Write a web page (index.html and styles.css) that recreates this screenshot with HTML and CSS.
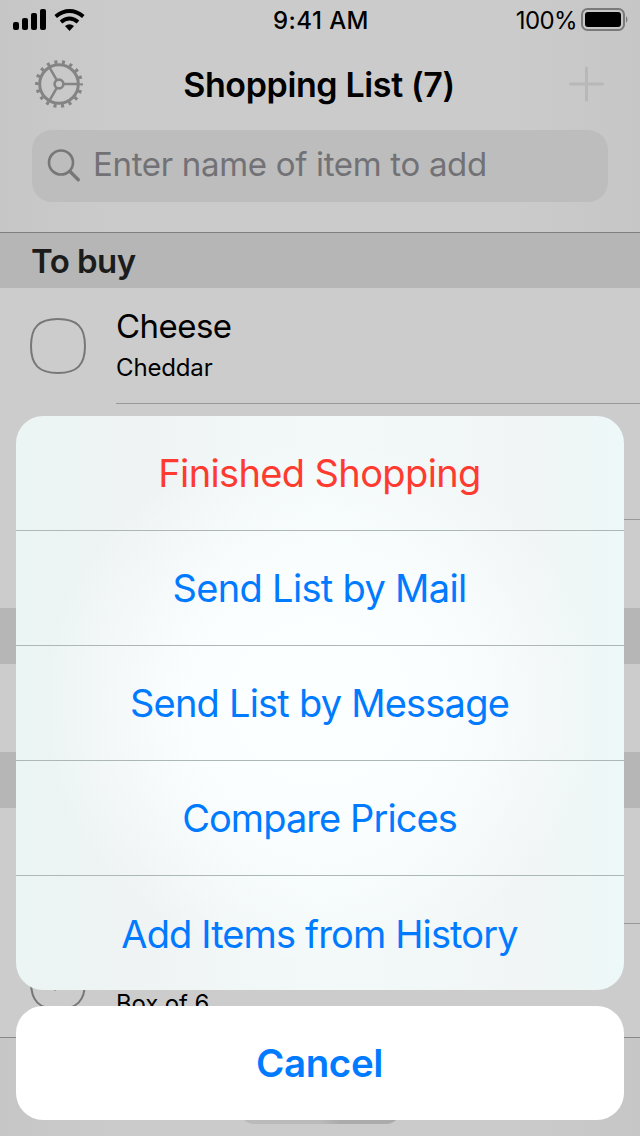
FILE: index.html
```html
<!DOCTYPE html>
<html lang="en">
<head>
<meta charset="utf-8">
<title>Shopping List</title>
<link rel="stylesheet" href="styles.css">
</head>
<body>
<div class="screen">
  <header class="top">
    <div class="status">
      <svg class="signal" width="76" height="24" viewBox="0 0 76 24">
        <rect x="1" y="14" width="6" height="8" rx="2"/><rect x="10" y="10" width="6" height="12" rx="2"/><rect x="19" y="5" width="6" height="17" rx="2"/><rect x="28" y="1" width="6" height="21" rx="2"/>
        <g fill="none" stroke="#000" stroke-width="4"><path d="M43.700 8.500Q57.500-2.500 71.300 8.500"/><path d="M49 14Q57.500 7 66 14"/></g>
        <path d="M53 18Q57.500 14.500 62 18L57.500 23Z"/>
      </svg>
      <span class="time">9:41 AM</span>
      <span class="power"><span class="pct">100%</span>
        <svg width="50" height="24" viewBox="0 0 50 24"><rect x="2" y="1" width="42" height="21" rx="5.500" fill="none" stroke="#7a7a7a" stroke-width="2"/><rect x="5" y="4" width="36" height="15" rx="3"/><path d="M46 8q3 3.500 0 7z" fill="#7a7a7a"/></svg>
      </span>
    </div>
    <div class="nav">
      <svg class="gear" width="50" height="50" viewBox="-25 -25 50 50">
        <g fill="none" stroke="#848484">
          <circle r="19.300" stroke-width="3"/>
          <circle r="22.100" stroke-width="3.600" stroke-dasharray="3 4.714" stroke-dashoffset="1.500"/>
          <circle r="4.400" stroke-width="2.600"/>
          <path d="M5 0H20M-2.500-4.300L-10-17.300M-2.500 4.300L-10 17.300" stroke-width="2.500"/>
        </g>
      </svg>
      <h1 class="title"><span>Shopping List (7)</span></h1>
      <svg class="plus" width="36" height="36" viewBox="0 0 36 36"><path d="M17.500 2V34M1.500 18H33.500" stroke="#b8b8b8" stroke-width="3" stroke-linecap="round"/></svg>
    </div>
    <div class="search">
      <svg width="34" height="34" viewBox="0 0 34 34" fill="none" stroke="#777" stroke-linecap="round"><circle cx="14" cy="13.500" r="12" stroke-width="2.600"/><path d="M23 22.500L31.300 30.800" stroke-width="3.400"/></svg>
      <span class="hint">Enter name of item to add</span>
    </div>
  </header>
  <main class="list">
    <h2 class="section"><span>To buy</span></h2>
    <div class="item">
      <svg class="box" width="56" height="56" viewBox="0 0 56 56"><path d="M28 1C47 1 55 9 55 28S47 55 28 55 1 47 1 28 9 1 28 1Z"/></svg>
      <div class="label"><span class="name">Cheese</span><span class="note">Cheddar</span></div>
    </div>
    <div class="item indent"><div class="label"></div></div>
    <div class="item short"></div>
    <h2 class="section"></h2>
    <div class="item short"></div>
    <h2 class="section"></h2>
    <div class="item indent"><div class="label"></div></div>
    <div class="item">
      <svg class="box" width="56" height="56" viewBox="0 0 56 56"><path d="M28 1C47 1 55 9 55 28S47 55 28 55 1 47 1 28 9 1 28 1Z"/><path d="M24 34.500L25 35.500L26 34.500"/></svg>
      <div class="label last"><span class="name"></span><span class="note six">Box of 6</span></div>
    </div>
  </main>
  <footer class="toolbar"><div class="segments"><i></i><i class="on"></i></div></footer>
  <div class="sheet">
    <div class="actions">
      <button class="action danger"><span class="finish">Finished Shopping</span></button>
      <button class="action"><span class="mail">Send List by Mail</span></button>
      <button class="action"><span class="message">Send List by Message</span></button>
      <button class="action"><span class="compare">Compare Prices</span></button>
      <button class="action"><span class="history">Add Items from History</span></button>
    </div>
    <button class="cancel"><span>Cancel</span></button>
  </div>
</div>
</body>
</html>
```
FILE: styles.css
```css
* { box-sizing: border-box; }
body { margin: 0; font-family: Inter, "Liberation Sans", sans-serif; color: #000; }
h1, h2 { margin: 0; }
button { border: 0; padding: 0; background: none; font-family: inherit; }
span { white-space: nowrap; }
svg { display: block; flex: none; }
.screen { position: relative; width: 640px; height: 1136px; overflow: hidden; background: #ccc; }
.top { height: 233px; border-bottom: 1px solid #7e7e7e; background: linear-gradient(90deg, #c6c6c6, #cbcbcb 18%, #cbcbcb 80%, #c6c6c6); }
.status { display: grid; grid-template-columns: 1fr auto 1fr; height: 40px; padding: 0 10px 0 12px; align-items: center; }
.time { font-size: 24px; font-weight: 500; letter-spacing: 0.45px; }
.power { display: flex; justify-content: flex-end; align-items: center; gap: 3px; }
.pct { font-size: 24px; letter-spacing: -0.6px; }
.nav { display: grid; grid-template-columns: 50px 1fr 50px; align-items: center; height: 90px; padding: 0 34px 2px; }
.title { font-size: 34px; font-weight: 600; letter-spacing: -0.37px; text-align: center; padding-right: 2px; }
.plus { justify-self: end; margin-right: 1px; }
.search { display: flex; align-items: center; height: 72px; margin: 0 32px; padding: 0 15px; gap: 12px; border-radius: 20px; background: #bdbdbd; color: #727276; }
.hint { margin-top: -4px; font-size: 33px; letter-spacing: -0.32px; }
.section { height: 55px; padding-left: 31px; background: #b6b6b6; color: #1c1c1c; font-size: 33px; font-weight: 600; line-height: 56px; letter-spacing: -0.55px; }
.section:not(:first-child) { height: 56px; }
.item { display: flex; height: 116px; padding-left: 30px; gap: 30px; }
.indent { padding-left: 116px; }
.short { height: 88px; }
.box { margin-top: 30px; fill: none; stroke: #777; stroke-width: 2; }
.label { display: flex; flex-direction: column; flex: 1; border-bottom: 1px solid #999; }
.name { height: 41px; margin-top: 18px; font-size: 33px; line-height: 40px; letter-spacing: -0.55px; }
.note { height: 30px; margin-top: 6px; font-size: 24px; line-height: 30px; letter-spacing: -0.15px; }
.last { border: 0; }
.six { letter-spacing: -0.15px; }
.toolbar { height: 99px; margin-top: -3px; padding: 31px 240px 0; border-top: 1px solid #888; background: linear-gradient(90deg, #c6c6c6, #cbcbcb 18%, #cbcbcb 80%, #c6c6c6); }
.segments { display: flex; height: 55px; border-radius: 14px; background: #bababa; overflow: hidden; }
.segments i { flex: 1; }
.on { background: linear-gradient(90deg, #bababa, #ababab 25%); }
.sheet { position: absolute; left: 16px; right: 16px; top: 416px; display: flex; flex-direction: column; gap: 16px; }
.actions { height: 574px; border-radius: 27px; overflow: hidden; background: radial-gradient(ellipse at 50% 50%, #fcffff 0, #fafefe 30%, rgba(247,252,252,0) 65%), linear-gradient(90deg, #ebf5f4, #eff3f3 20%, #f3f9f9 50%, #f1f5f5 85%, #edf8f8); }
.action { display: flex; align-items: center; justify-content: center; width: 100%; height: 115px; padding-right: 1px; border-bottom: 1px solid #adb7b7; color: #007aff; font-size: 38px; }
.action:last-child { border: 0; }
.danger { color: #ff3b30; }
.finish { letter-spacing: -0.62px; }
.mail { letter-spacing: -0.68px; }
.message { letter-spacing: -0.78px; }
.compare { letter-spacing: -0.92px; }
.history { letter-spacing: -0.87px; }
.cancel { height: 114px; padding-right: 1px; border-radius: 27px; background: #fff; color: #007aff; font-size: 38.5px; font-weight: 600; letter-spacing: -0.38px; }
```
